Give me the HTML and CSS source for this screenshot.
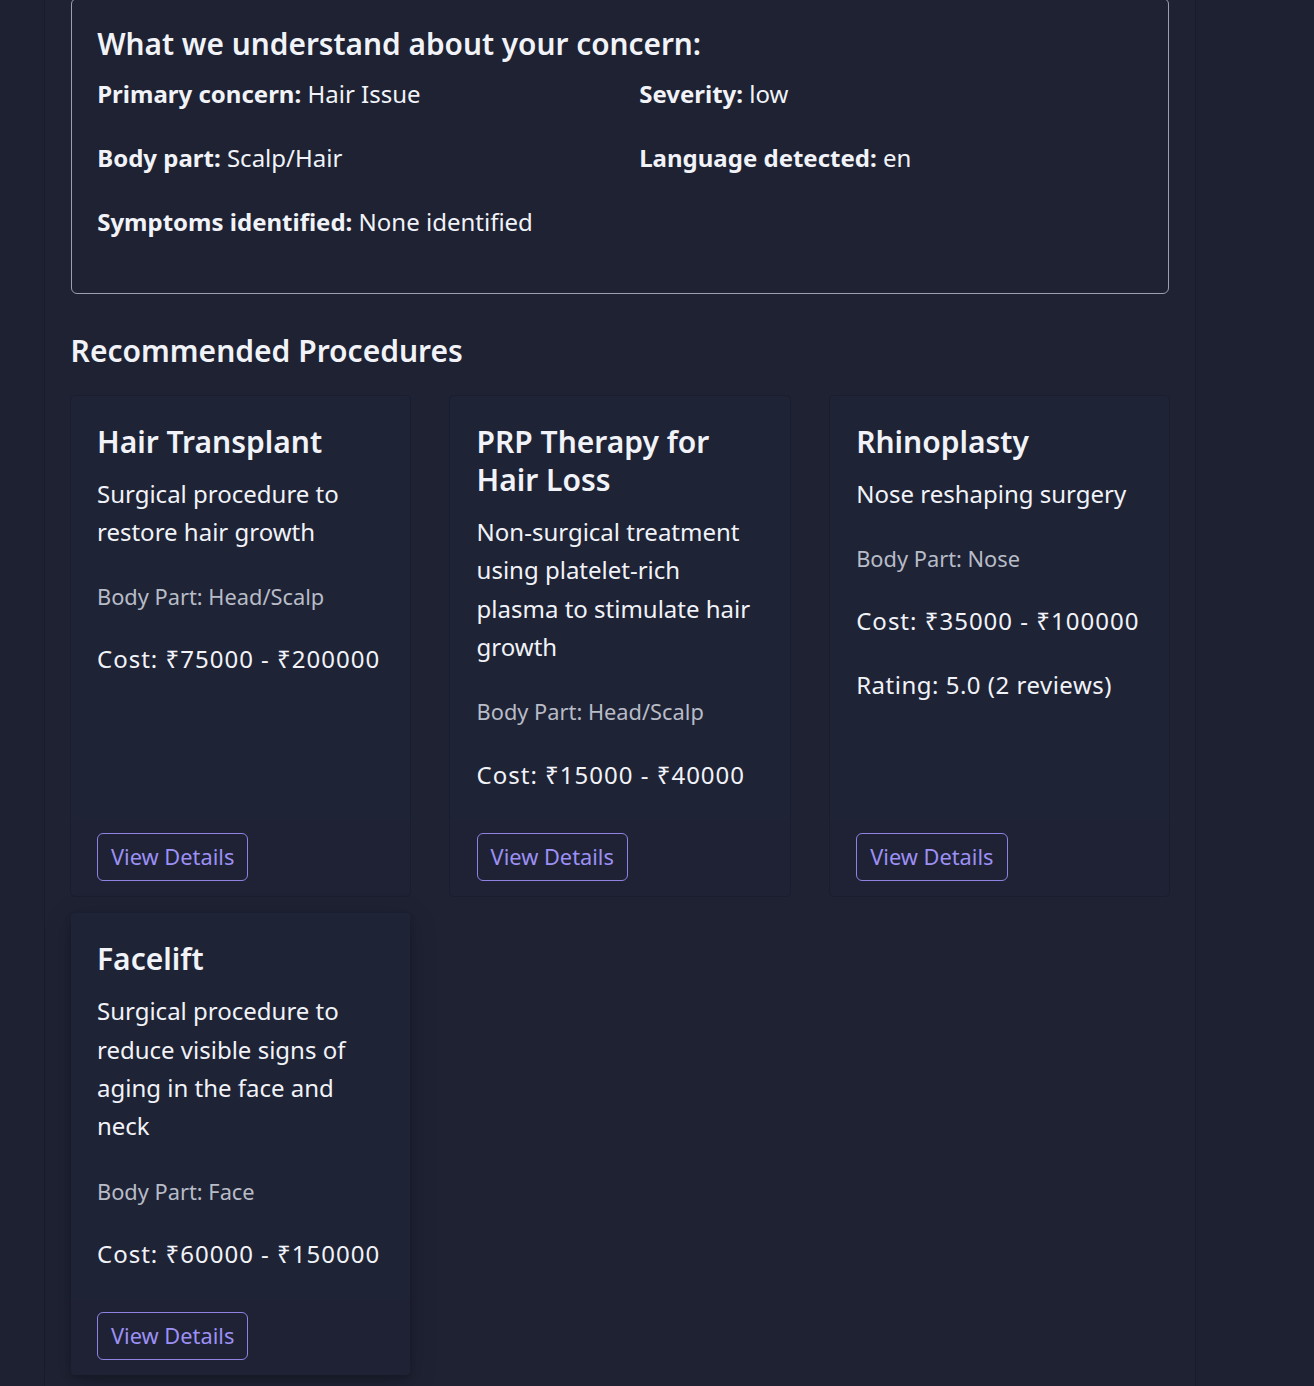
FILE: index.html
```html
<!DOCTYPE html>
<html lang="en">
<head>
<meta charset="utf-8">
<title>Recommended Procedures</title>
<link rel="stylesheet" href="styles.css">
</head>
<body>
<main class="page">
  <section class="summary">
    <h2 class="summary-title">What we understand about your concern:</h2>
    <div class="summary-grid">
      <p class="row"><strong>Primary concern:</strong> Hair Issue</p>
      <p class="row"><strong>Severity:</strong> low</p>
      <p class="row"><strong>Body part:</strong> Scalp/Hair</p>
      <p class="row"><strong>Language detected:</strong> en</p>
      <p class="row"><strong>Symptoms identified:</strong> None identified</p>
    </div>
  </section>

  <h2 class="section-title">Recommended Procedures</h2>

  <div class="cards">
    <article class="card">
      <div class="card-content">
        <h3 class="card-title">Hair Transplant</h3>
        <p class="desc">Surgical procedure to restore hair growth</p>
        <p class="part">Body Part: Head/Scalp</p>
        <p class="meta cost">Cost: ₹75000 - ₹200000</p>
      </div>
      <div class="card-actions"><button class="btn">View Details</button></div>
    </article>
    <article class="card">
      <div class="card-content">
        <h3 class="card-title">PRP Therapy for Hair Loss</h3>
        <p class="desc">Non-surgical treatment using platelet-rich plasma to stimulate hair growth</p>
        <p class="part">Body Part: Head/Scalp</p>
        <p class="meta cost">Cost: ₹15000 - ₹40000</p>
      </div>
      <div class="card-actions"><button class="btn">View Details</button></div>
    </article>
    <article class="card">
      <div class="card-content">
        <h3 class="card-title">Rhinoplasty</h3>
        <p class="desc">Nose reshaping surgery</p>
        <p class="part">Body Part: Nose</p>
        <p class="meta cost">Cost: ₹35000 - ₹100000</p>
        <p class="meta rating">Rating: 5.0 (2 reviews)</p>
      </div>
      <div class="card-actions"><button class="btn">View Details</button></div>
    </article>
    <article class="card card-raised">
      <div class="card-content">
        <h3 class="card-title">Facelift</h3>
        <p class="desc">Surgical procedure to reduce visible signs of aging in the face and neck</p>
        <p class="part">Body Part: Face</p>
        <p class="meta cost">Cost: ₹60000 - ₹150000</p>
      </div>
      <div class="card-actions"><button class="btn">View Details</button></div>
    </article>
  </div>
</main>
</body>
</html>
```

FILE: styles.css
```css
* { box-sizing: border-box; }

html, body {
  margin: 0;
  padding: 0;
  background: #1d2132;
}

body {
  font-family: "Noto Sans", Roboto, "DejaVu Sans", sans-serif;
  color: #f1f3f8;
}

.page {
  width: 1150px;
  margin: -2px 0 0 45px;
  padding: 0 25.6px 40px;
  background: #1e2233;
  box-shadow: 0 0 0 1px rgba(20, 23, 36, 0.6);
  min-height: 1400px;
}

.summary {
  border: 1px solid #9ba0ae;
  border-radius: 6px;
  padding: 25.6px 25.6px 25.6px;
}

.summary-title {
  margin: 0 0 12.4px;
  font-size: 29.8px;
  line-height: 38.4px;
  font-weight: 600;
}

.summary-grid {
  display: grid;
  grid-template-columns: 1fr 1fr;
  column-gap: 38.4px;
}

.row {
  margin: 0 0 25.6px;
  font-size: 24px;
  line-height: 38.4px;
}

.row strong { font-weight: 700; }

.section-title {
  margin: 38.4px 0 24.8px;
  font-size: 30px;
  line-height: 38.4px;
  font-weight: 600;
}

.cards {
  display: grid;
  grid-template-columns: repeat(3, 1fr);
  column-gap: 40px;
  row-gap: 17px;
}

.card {
  display: flex;
  flex-direction: column;
  background: #1e2234;
  border-radius: 4px;
  box-shadow: 0 0 0 1px rgba(24, 27, 42, 0.6);
}

.card-raised {
  box-shadow: 0 3px 6px rgba(0, 0, 0, 0.16), 0 6px 28px rgba(0, 0, 0, 0.2);
}

.card-content {
  flex: 1;
  padding: 27px 25.6px 25.6px 26.4px;
  background: #1f2336;
  border-radius: 4px 4px 0 0;
}

.card-title {
  margin: 0 0 13.6px;
  font-size: 30px;
  line-height: 38.4px;
  font-weight: 600;
}

.desc {
  margin: 0 0 28.8px;
  font-size: 24px;
  line-height: 38.4px;
}

.part {
  margin: 0 0 27px;
  font-size: 21.8px;
  line-height: 33.3px;
  color: #b8bcc7;
}

.meta {
  margin: 0 0 25.6px;
  font-size: 24px;
  line-height: 38.4px;
}

.cost { letter-spacing: 1px; }
.rating { letter-spacing: 0.5px; }

.meta:last-child { margin-bottom: 0; }

.card-actions {
  padding: 12.8px 25.6px 15.6px 26.4px;
}

.btn {
  height: 48px;
  padding: 0 13px;
  border: 1px solid #8f82e2;
  border-radius: 6px;
  background: transparent;
  color: #9d90f4;
  font-family: inherit;
  font-size: 21.8px;
  font-weight: 400;
  cursor: pointer;
}
```
